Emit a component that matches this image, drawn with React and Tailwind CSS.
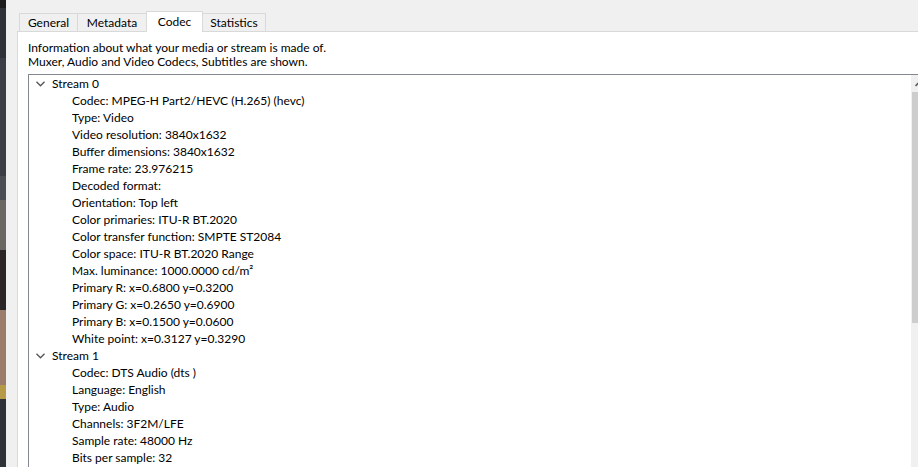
// App.jsx - Codec tab of a media information dialog

const tabs = [
  { label: 'General', w: 'w-[59px]' },
  { label: 'Metadata', w: 'w-[70px]' },
  { label: 'Codec', w: 'w-[57px]', active: true },
  { label: 'Statistics', w: 'w-[64px]' },
];

const streams = [
  {
    name: 'Stream 0',
    items: [
      'Codec: MPEG-H Part2/HEVC (H.265) (hevc)',
      'Type: Video',
      'Video resolution: 3840x1632',
      'Buffer dimensions: 3840x1632',
      'Frame rate: 23.976215',
      'Decoded format:',
      'Orientation: Top left',
      'Color primaries: ITU-R BT.2020',
      'Color transfer function: SMPTE ST2084',
      'Color space: ITU-R BT.2020 Range',
      'Max. luminance: 1000.0000 cd/m²',
      'Primary R: x=0.6800 y=0.3200',
      'Primary G: x=0.2650 y=0.6900',
      'Primary B: x=0.1500 y=0.0600',
      'White point: x=0.3127 y=0.3290',
    ],
  },
  {
    name: 'Stream 1',
    items: [
      'Codec: DTS Audio (dts )',
      'Language: English',
      'Type: Audio',
      'Channels: 3F2M/LFE',
      'Sample rate: 48000 Hz',
      'Bits per sample: 32',
    ],
  },
];

const Chevron = () => (
  <svg width="9" height="6" viewBox="0 0 9 6" className="shrink-0">
    <path d="M0.5 0.8 L4.5 4.8 L8.5 0.8" fill="none" stroke="#555" strokeWidth="1.3" />
  </svg>
);

const App = () => {
  return (
    <div
      className="flex h-[467px] w-[918px] overflow-hidden bg-[#f0f0f0] text-[12px] text-black"
      style={{ fontFamily: 'Lato, "Liberation Sans", Arial, sans-serif' }}
    >
      {/* Fondo de otra ventana a la izquierda */}
      <div className="flex w-[6px] shrink-0 flex-col">
        <div className="h-[8px] bg-[#1d1d1d]" />
        <div className="h-[50px] bg-[#2f3237]" />
        <div className="h-[118px] bg-[#3b3f45]" />
        <div className="h-[24px] bg-[#4b4e53]" />
        <div className="h-[50px] bg-[#6a6661]" />
        <div className="h-[60px] bg-[#2b2625]" />
        <div className="h-[75px] bg-[#9b7b6b]" />
        <div className="h-[14px] bg-[#b79a48]" />
        <div className="flex-1 bg-[#2f3337]" />
      </div>

      <div className="flex min-w-0 flex-1 flex-col pl-[11px] pt-[11px]">
        {/* Pestañas */}
        <div className="flex h-[20px] items-end pl-[2px]">
          {tabs.map((t) =>
            t.active ? (
              <div
                key={t.label}
                className={`relative z-10 -mb-px -mr-px flex h-[21px] ${t.w} items-center justify-center border border-b-0 border-[#d9d9d9] bg-white`}
              >
                {t.label}
              </div>
            ) : (
              <div
                key={t.label}
                className={`flex h-[18px] ${t.w} items-center justify-center border border-b-0 border-[#d9d9d9] bg-[#f0f0f0] -mr-px`}
              >
                {t.label}
              </div>
            )
          )}
        </div>

        {/* Panel */}
        <div className="flex w-[960px] flex-1 flex-col border-l border-t border-[#d9d9d9] bg-white pl-[10px] pt-[9px]">
          <p className="leading-[14px]">Information about what your media or stream is made of.</p>
          <p className="leading-[14px]">Muxer, Audio and Video Codecs, Subtitles are shown.</p>

          <div className="mt-[5px] flex w-[901px] flex-1 border border-b-0 border-[#828790]">
            <div className="flex-1 overflow-hidden">
              {streams.map((s) => (
                <div key={s.name}>
                  <div className="flex h-[17px] items-center pl-[7px]">
                    <Chevron />
                    <span className="ml-[7px]">{s.name}</span>
                  </div>
                  {s.items.map((item) => (
                    <div key={item} className="flex h-[17px] items-center pl-[43px] whitespace-nowrap">
                      {item}
                    </div>
                  ))}
                </div>
              ))}
            </div>

            {/* Barra de desplazamiento */}
            <div className="flex w-[17px] shrink-0 flex-col bg-[#f0f0f0]">
              <div className="flex h-[17px] items-center justify-center">
                <svg width="9" height="6" viewBox="0 0 9 6">
                  <path d="M0.5 5 L4.5 1 L8.5 5" fill="none" stroke="#606060" strokeWidth="1.6" />
                </svg>
              </div>
              <div className="mx-[1px] h-[231px] bg-[#cdcdcd]" />
            </div>
          </div>
        </div>
      </div>
    </div>
  );
};

export default App;
